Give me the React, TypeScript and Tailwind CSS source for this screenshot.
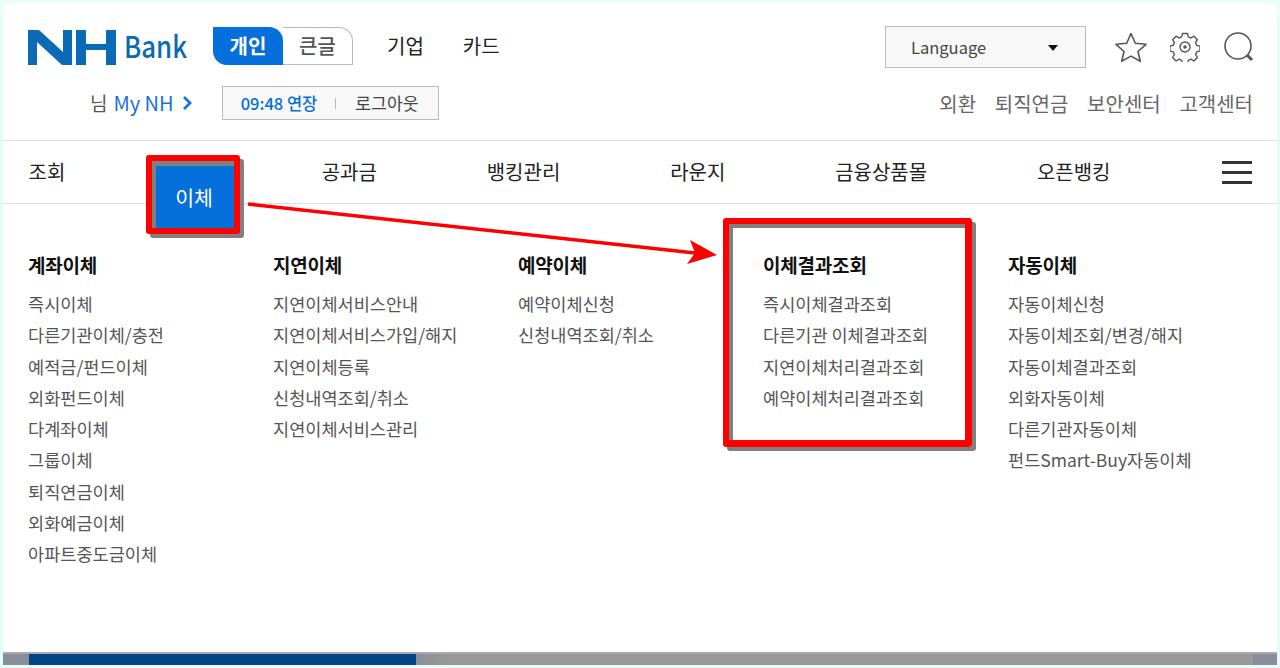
const columns = [
  {
    title: '계좌이체',
    items: ['즉시이체', '다른기관이체/충전', '예적금/펀드이체', '외화펀드이체', '다계좌이체', '그룹이체', '퇴직연금이체', '외화예금이체', '아파트중도금이체'],
  },
  {
    title: '지연이체',
    items: ['지연이체서비스안내', '지연이체서비스가입/해지', '지연이체등록', '신청내역조회/취소', '지연이체서비스관리'],
  },
  {
    title: '예약이체',
    items: ['예약이체신청', '신청내역조회/취소'],
  },
  {
    title: '이체결과조회',
    items: ['즉시이체결과조회', '다른기관 이체결과조회', '지연이체처리결과조회', '예약이체처리결과조회'],
  },
  {
    title: '자동이체',
    items: ['자동이체신청', '자동이체조회/변경/해지', '자동이체결과조회', '외화자동이체', '다른기관자동이체', '펀드Smart-Buy자동이체'],
  },
]

const navItems = ['조회', '이체', '공과금', '뱅킹관리', '라운지', '금융상품몰', '오픈뱅킹']

function Logo() {
  return (
    <svg width="88" height="35" viewBox="0 0 88 35" fill="#0a6ab5">
      <path d="M0 0h11l24 22V0h9v35H34L9 12v23H0z" />
      <path d="M48 0h10v14h20V0h10v35H78V20H58v15H48z" />
    </svg>
  )
}

function StarIcon() {
  return (
    <svg width="32" height="30" viewBox="0 0 32 30" fill="none" stroke="#555" strokeWidth="1.600" strokeLinejoin="round">
      <path d="M16 1.500l4.300 9.800 10.700 1-8 7.200 2.300 9.800L16 24.100l-9.300 5.200 2.300-9.800-8-7.200 10.700-1z" />
    </svg>
  )
}

function GearIcon() {
  return (
    <svg width="30" height="30" viewBox="0 0 30 30" fill="none" stroke="#555" strokeWidth="1.400" strokeLinejoin="round">
      <path d="M12.500 1.500h5l.8 3.400 2.600 1.100 3-1.800 3.500 3.500-1.800 3 1.100 2.600 3.300.8v5l-3.300.8-1.100 2.600 1.800 3-3.500 3.500-3-1.800-2.600 1.100-.8 3.300h-5l-.8-3.300-2.600-1.100-3 1.800-3.500-3.500 1.800-3-1.100-2.600-3.400-.8v-5l3.400-.8 1.100-2.600-1.800-3 3.500-3.500 3 1.800 2.600-1.100z" />
      <circle cx="15" cy="15" r="5" />
      <circle cx="15" cy="15" r="1.800" fill="#555" stroke="none" />
    </svg>
  )
}

function SearchIcon() {
  return (
    <svg width="30" height="30" viewBox="0 0 30 30" fill="none" stroke="#555">
      <circle cx="14" cy="14" r="13" strokeWidth="1.600" />
      <path d="M23.500 23.500l4.500 4.500" strokeWidth="3" />
    </svg>
  )
}

export default function App() {
  return (
    <div className="h-[668px] w-[1280px] overflow-hidden bg-[#e6fff6] p-[3px] font-['Noto_Sans_CJK_KR','Noto_Sans',sans-serif]">
      <div className="relative flex h-[662px] flex-col bg-white">
        {/* Top header */}
        <header className="h-[138px] border-b border-[#ddd] pr-[23px] pl-[25px]">
          <div className="flex items-start justify-between pt-[23px]">
            <div className="flex items-center">
              <div className="mt-[4px] flex items-center">
                <Logo />
                <span className="ml-[8px] w-[64px] origin-left -translate-y-[2px] scale-x-[.86] text-[30px] leading-[35px] font-medium text-[#0a6ab5]">Bank</span>
              </div>
              <div className="ml-[25px] flex h-[38px] w-[140px] text-[20px] font-bold">
                <span className="flex w-[70px] items-center justify-center rounded-tr-[14px] rounded-bl-[14px] bg-[#056fdb] text-white">개인</span>
                <span className="flex w-[70px] items-center justify-center rounded-tr-[14px] border-t border-r border-b border-[#bbb] font-medium text-[#555]">큰글</span>
              </div>
              <span className="ml-[34px] text-[20px] text-[#222]">기업</span>
              <span className="ml-[39px] text-[20px] text-[#222]">카드</span>
            </div>
            <div className="flex items-center">
              <div className="flex h-[42px] w-[201px] items-center justify-between border border-[#bbb] bg-[#f8f8f8] pr-[27px] pl-[25px] text-[16.500px] text-[#444]">
                Language
                <span className="mt-[2px] h-0 w-0 border-x-[5px] border-t-[6px] border-x-transparent border-t-[#111]" />
              </div>
              <div className="ml-[29px]"><StarIcon /></div>
              <div className="ml-[23px]"><GearIcon /></div>
              <div className="ml-[24px]"><SearchIcon /></div>
            </div>
          </div>
          <div className="mt-[18px] flex items-center justify-between">
            <div className="flex items-center">
              <span className="ml-[62px] text-[19px] text-[#555]">님</span>
              <span className="ml-[6px] text-[20px] text-[#1a73d6]">My NH</span>
              <svg className="ml-[8px]" width="10" height="14" viewBox="0 0 10 14" fill="none" stroke="#1a73d6" strokeWidth="2.800">
                <path d="M2 1l6 6-6 6" />
              </svg>
              <div className="ml-[30px] flex h-[34px] w-[217px] items-center border border-[#bbb] bg-[#f8f8f8]">
                <span className="ml-[18px] text-[16.500px] font-medium text-[#056fdb]">09:48 연장</span>
                <span className="ml-[18px] h-[11px] w-px bg-[#bbb]" />
                <span className="ml-[19px] text-[17.200px] text-[#444]">로그아웃</span>
              </div>
            </div>
            <div className="mt-[2px] mr-px flex gap-[18.700px] text-[20px] text-[#666]">
              <span>외환</span>
              <span>퇴직연금</span>
              <span>보안센터</span>
              <span>고객센터</span>
            </div>
          </div>
        </header>

        {/* Main nav */}
        <nav className="flex h-[63px] items-center justify-between border-b border-[#ddd] pr-[25px] pl-[25.500px]">
          <div className="flex gap-[109.800px] text-[20px] leading-[62px] text-[#222]">
            {navItems.map((item) =>
              item === '이체' ? (
                <span key={item} className="relative text-white">
                  {/* 이체 tab with the red mark drawn around it */}
                  <span className="absolute top-[14px] left-[-29.500px] box-border flex h-[79px] w-[94px] items-center justify-center rounded-[3px] border-[6px] border-[#f00] bg-[#056fdb] pt-[5px] pl-[3px] text-[20.500px] leading-none shadow-[inset_4px_5px_0_#808080,4px_4px_0_#808080]">
                    이체
                  </span>
                  <span className="invisible">이체</span>
                </span>
              ) : (
                <span key={item}>{item}</span>
              ),
            )}
          </div>
          <div className="flex w-[30px] flex-col gap-[7px]">
            <span className="h-[3px] bg-[#333]" />
            <span className="h-[3px] bg-[#333]" />
            <span className="h-[3px] bg-[#333]" />
          </div>
        </nav>

        {/* Dropdown columns */}
        <div className="grid flex-1 grid-cols-[repeat(5,245px)] px-[25px] pt-[46px]">
          {columns.map((col) => (
            <div key={col.title} className="relative">
              {col.title === '이체결과조회' && (
                <div className="absolute top-[-32px] left-[-40px] box-border h-[229px] w-[249px] rounded-[3px] border-[6px] border-r-[7px] border-b-[7px] border-[#f00] shadow-[inset_4px_4px_0_#808080,4px_4px_0_#808080]" />
              )}
              <h3 className="relative text-[19px] leading-[30px] font-bold tracking-[-0.2px] text-[#111]">{col.title}</h3>
              <ul className="relative mt-[8px] text-[17.550px] leading-[31.250px] text-[#555]">
                {col.items.map((item) => (
                  <li key={item}>{item}</li>
                ))}
              </ul>
            </div>
          ))}
        </div>

        {/* Bottom bar */}
        <div className="flex h-[13px] border-t-2 border-[#aaa] bg-[#999]">
          <div className="w-[26px] bg-[#8a8d9b]" />
          <div className="w-[387px] bg-[#034484]" />
          <div className="w-[30px] bg-gradient-to-r from-[#8a8d9b] to-[#999]" />
          <div className="flex-1" />
          <div className="w-[24px] bg-[#8a8d9b]" />
        </div>

        {/* Arrow mark */}
        <svg className="pointer-events-none absolute top-0 left-0" width="1274" height="662" fill="#f00">
          <path d="M245 201l447 49" stroke="#f00" strokeWidth="3.500" />
          <path d="M687 237l27 15-30 9 8-11z" />
        </svg>
      </div>
    </div>
  )
}
